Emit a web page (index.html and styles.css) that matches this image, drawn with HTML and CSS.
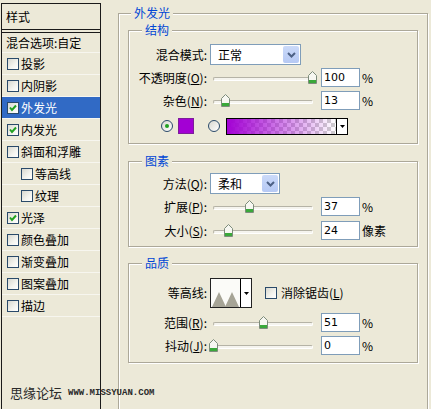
FILE: index.html
```html
<!DOCTYPE html>
<html lang="zh-CN">
<head>
<meta charset="utf-8">
<title>图层样式</title>
<link rel="stylesheet" href="styles.css">
</head>
<body>
<div class="dialog">
  <div class="sidebar">
    <div class="side-head">样式</div>
    <div class="side-blend">混合选项:自定</div>
    <ul class="side-list">
      <li class="item"><span class="cb"></span>投影</li>
      <li class="item"><span class="cb"></span>内阴影</li>
      <li class="item selected"><span class="cb"><svg viewBox="0 0 10 10" width="10" height="10"><polyline points="2,4.5 4,7 8,2.5" fill="none" stroke="#21a121" stroke-width="2"/></svg></span>外发光</li>
      <li class="item"><span class="cb"><svg viewBox="0 0 10 10" width="10" height="10"><polyline points="2,4.5 4,7 8,2.5" fill="none" stroke="#21a121" stroke-width="2"/></svg></span>内发光</li>
      <li class="item"><span class="cb"></span>斜面和浮雕</li>
      <li class="item sub"><span class="cb"></span>等高线</li>
      <li class="item sub"><span class="cb"></span>纹理</li>
      <li class="item"><span class="cb"><svg viewBox="0 0 10 10" width="10" height="10"><polyline points="2,4.5 4,7 8,2.5" fill="none" stroke="#21a121" stroke-width="2"/></svg></span>光泽</li>
      <li class="item"><span class="cb"></span>颜色叠加</li>
      <li class="item"><span class="cb"></span>渐变叠加</li>
      <li class="item"><span class="cb"></span>图案叠加</li>
      <li class="item"><span class="cb"></span>描边</li>
    </ul>
  </div>

  <div class="main">
    <div class="group outer">
      <span class="legend">外发光</span>

      <div class="group inner g-struct">
        <span class="legend">结构</span>
        <div class="row row-select">
          <span class="label">混合模式:</span>
          <div class="select w91">
            <span class="sel-val">正常</span>
            <span class="sel-btn"><svg viewBox="0 0 9 6" width="9" height="6"><polyline points="1,1 4.5,4.5 8,1" fill="none" stroke="#4d6185" stroke-width="2"/></svg></span>
          </div>
        </div>
        <div class="row row-slider mt3">
          <span class="label">不透明度(<u>O</u>):</span>
          <div class="slider"><span class="track"></span><svg class="thumb" style="left:98px" viewBox="0 0 9 13" width="9" height="13"><path d="M4.5 0.5 L8.5 4.5 V12.5 H0.5 V4.5 Z" fill="#f7f7f1" stroke="#7d8c7b"/><rect x="1" y="9" width="7" height="3" fill="#3aa83a"/></svg></div>
          <span class="num">100</span><span class="unit">%</span>
        </div>
        <div class="row row-slider mt4">
          <span class="label">杂色(<u>N</u>):</span>
          <div class="slider"><span class="track"></span><svg class="thumb" style="left:11px" viewBox="0 0 9 13" width="9" height="13"><path d="M4.5 0.5 L8.5 4.5 V12.5 H0.5 V4.5 Z" fill="#f7f7f1" stroke="#7d8c7b"/><rect x="1" y="9" width="7" height="3" fill="#3aa83a"/></svg></div>
          <span class="num">13</span><span class="unit">%</span>
        </div>
        <div class="row row-color">
          <span class="radio checked"><span class="dot"></span></span>
          <span class="swatch"></span>
          <span class="radio radio-gap"></span>
          <div class="gradient">
            <span class="ramp"></span>
            <span class="drop"><svg viewBox="0 0 5 3" width="5" height="3"><polygon points="0,0 5,0 2.5,3" fill="#000"/></svg></span>
          </div>
        </div>
      </div>

      <div class="group inner g-elem">
        <span class="legend">图素</span>
        <div class="row row-select">
          <span class="label">方法(<u>Q</u>):</span>
          <div class="select w70">
            <span class="sel-val">柔和</span>
            <span class="sel-btn"><svg viewBox="0 0 9 6" width="9" height="6"><polyline points="1,1 4.5,4.5 8,1" fill="none" stroke="#4d6185" stroke-width="2"/></svg></span>
          </div>
        </div>
        <div class="row row-slider mt3">
          <span class="label">扩展(<u>P</u>):</span>
          <div class="slider"><span class="track"></span><svg class="thumb" style="left:35px" viewBox="0 0 9 13" width="9" height="13"><path d="M4.5 0.5 L8.5 4.5 V12.5 H0.5 V4.5 Z" fill="#f7f7f1" stroke="#7d8c7b"/><rect x="1" y="9" width="7" height="3" fill="#3aa83a"/></svg></div>
          <span class="num">37</span><span class="unit">%</span>
        </div>
        <div class="row row-slider mt5">
          <span class="label">大小(<u>S</u>):</span>
          <div class="slider"><span class="track"></span><svg class="thumb" style="left:14px" viewBox="0 0 9 13" width="9" height="13"><path d="M4.5 0.5 L8.5 4.5 V12.5 H0.5 V4.5 Z" fill="#f7f7f1" stroke="#7d8c7b"/><rect x="1" y="9" width="7" height="3" fill="#3aa83a"/></svg></div>
          <span class="num">24</span><span class="unit">像素</span>
        </div>
      </div>

      <div class="group inner g-qual">
        <span class="legend">品质</span>
        <div class="row row-contour">
          <span class="label">等高线:</span>
          <div class="contour">
            <span class="preview"><svg viewBox="0 0 29 28" width="29" height="28"><polygon points="1,28 8,13 15,28" fill="#a6a496"/><polygon points="14,28 21,13 28,28" fill="#a6a496"/></svg></span>
            <span class="drop"><svg viewBox="0 0 5 3" width="5" height="3"><polygon points="0,0 5,0 2.5,3" fill="#000"/></svg></span>
          </div>
          <span class="cb cb-gap"></span><span class="cb-label">消除锯齿(<u>L</u>)</span>
        </div>
        <div class="row row-slider mt5">
          <span class="label">范围(<u>R</u>):</span>
          <div class="slider"><span class="track"></span><svg class="thumb" style="left:49px" viewBox="0 0 9 13" width="9" height="13"><path d="M4.5 0.5 L8.5 4.5 V12.5 H0.5 V4.5 Z" fill="#f7f7f1" stroke="#7d8c7b"/><rect x="1" y="9" width="7" height="3" fill="#3aa83a"/></svg></div>
          <span class="num">51</span><span class="unit">%</span>
        </div>
        <div class="row row-slider mt4">
          <span class="label">抖动(<u>J</u>):</span>
          <div class="slider"><span class="track"></span><svg class="thumb" style="left:-1px" viewBox="0 0 9 13" width="9" height="13"><path d="M4.5 0.5 L8.5 4.5 V12.5 H0.5 V4.5 Z" fill="#f7f7f1" stroke="#7d8c7b"/><rect x="1" y="9" width="7" height="3" fill="#3aa83a"/></svg></div>
          <span class="num">0</span><span class="unit">%</span>
        </div>
      </div>
    </div>
  </div>

  <div class="watermark"><span class="wm-cn">思缘论坛</span><span class="wm-url">www.missyuan.com</span></div>
</div>
</body>
</html>
```

FILE: styles.css
```css
html, body {
  margin: 0;
  padding: 0;
}
body {
  width: 431px;
  height: 409px;
  overflow: hidden;
  background: #ece9d8;
  color: #000;
  font-family: "Noto Sans CJK SC", "DejaVu Sans", sans-serif;
  font-size: 12px;
  line-height: 14px;
}
.dialog {
  position: relative;
  display: flex;
  height: 409px;
  overflow: hidden;
}

/* ---------- left style list ---------- */
.sidebar {
  flex: none;
  width: 100px;
  height: 430px;
  margin: 3px 0 0 1px;
  box-sizing: border-box;
  border: 1px solid #1a1a1a;
  border-bottom: none;
}
.side-head {
  height: 25px;
  line-height: 25px;
  padding-left: 4px;
  border-bottom: 1px solid #1a1a1a;
}
.side-blend {
  margin-top: 2px;
  border-top: 1px solid #1a1a1a;
  height: 19px;
  line-height: 19px;
  padding-left: 4px;
  border-bottom: 1px solid #f7f6ef;
}
.side-list {
  list-style: none;
  margin: 0;
  padding: 0;
}
.item {
  display: flex;
  align-items: center;
  height: 21px;
  padding-left: 5px;
  border-bottom: 1px solid #f7f6ef;
  white-space: nowrap;
}
.item.sub {
  padding-left: 19px;
}
.item.selected {
  background: #316ac5;
  color: #fff;
}
.cb {
  flex: none;
  display: flex;
  align-items: center;
  justify-content: center;
  width: 12px;
  height: 12px;
  box-sizing: border-box;
  border: 1px solid #2a4a6a;
  background: linear-gradient(135deg, #d8d8d0 0%, #f4f4ef 60%, #ffffff 100%);
  margin-right: 2px;
}
.cb svg {
  display: block;
}

/* ---------- right panel ---------- */
.main {
  flex: 1;
  min-width: 0;
  padding: 13px 3px 0 17px;
}
.group {
  position: relative;
  border: 1px solid #aca899;
  box-shadow: inset 1px 1px 0 #fff, 1px 1px 0 #fff;
}
.legend {
  position: absolute;
  top: -8px;
  left: 13px;
  padding: 0 3px;
  line-height: 14px;
  background: #ece9d8;
  color: #0046d5;
  white-space: nowrap;
}
.outer {
  padding: 16px 9px 80px 9px;
}
.outer > .legend {
  left: 12px;
}
.g-struct {
  padding: 13px 0 9px 0;
}
.g-elem {
  margin-top: 17px;
  padding: 11px 0 6px 0;
}
.g-qual {
  margin-top: 16px;
  padding: 14px 0 7px 0;
}

.row {
  display: flex;
  align-items: center;
  white-space: nowrap;
}
.row-select { height: 21px; }
.row-slider { height: 19px; }
.row-color { height: 16px; margin-top: 8px; padding-left: 32px; }
.row-contour { height: 30px; }
.mt3 { margin-top: 3px; }
.mt4 { margin-top: 4px; }
.mt5 { margin-top: 5px; }

.label {
  flex: none;
  width: 78px;
  margin-right: 3px;
  text-align: right;
}
u {
  text-decoration: underline;
  text-underline-offset: 1px;
}

/* select */
.select {
  display: flex;
  height: 21px;
  box-sizing: border-box;
  border: 1px solid #7f9db9;
  background: #fff;
}
.w91 { width: 91px; }
.w70 { width: 70px; }
.sel-val {
  flex: 1;
  padding-left: 7px;
  line-height: 19px;
}
.sel-btn {
  flex: none;
  width: 16px;
  margin: 1px;
  border-radius: 2px;
  background: linear-gradient(#cbdaf9, #b6c9f4);
  display: flex;
  align-items: center;
  justify-content: center;
}
.sel-btn svg { display: block; }

/* slider */
.slider {
  position: relative;
  flex: none;
  width: 105px;
  height: 19px;
  display: flex;
  align-items: center;
}
.track {
  flex: 1;
  height: 4px;
  margin: 2px 2px 0 3px;
  box-sizing: border-box;
  border: 1px solid #b5b3a6;
  border-right-color: #fff;
  border-bottom-color: #fff;
  border-radius: 2px;
  background: #f5f4ee;
}
.thumb {
  position: absolute;
  top: 3px;
  display: block;
}

.num {
  flex: none;
  width: 39px;
  height: 19px;
  margin-left: 6px;
  box-sizing: border-box;
  border: 1px solid #7f9db9;
  background: #fff;
  padding-left: 2px;
  line-height: 17px;
  font-family: "DejaVu Sans", sans-serif;
  font-size: 11px;
}
.unit {
  margin-left: 2px;
}

/* colour row */
.radio {
  flex: none;
  width: 12px;
  height: 12px;
  box-sizing: border-box;
  border: 1px solid #2a4a6a;
  border-radius: 50%;
  background: linear-gradient(135deg, #d8d8d0, #ffffff);
  display: flex;
  align-items: center;
  justify-content: center;
}
.radio .dot {
  width: 4px;
  height: 4px;
  border-radius: 50%;
  background: #21a121;
}
.radio-gap {
  margin-left: 14px;
}
.swatch {
  flex: none;
  width: 16px;
  height: 16px;
  margin-left: 5px;
  box-sizing: border-box;
  border: 1px solid #7d1d9a;
  background: #a300d4;
}
.gradient {
  flex: none;
  display: flex;
  width: 122px;
  height: 17px;
  margin-left: 6px;
  box-sizing: border-box;
  border: 1px solid #000;
}
.ramp {
  flex: 1;
  background:
    linear-gradient(to right, rgba(163, 0, 212, 1), rgba(163, 0, 212, 0)),
    conic-gradient(#cfcfcf 25%, #ffffff 0 50%, #cfcfcf 0 75%, #ffffff 0) 0 0 / 8px 8px;
}
.drop {
  flex: none;
  width: 10px;
  border-left: 1px solid #000;
  background: #fff;
  display: flex;
  align-items: center;
  justify-content: center;
}
.drop svg { display: block; }

/* contour */
.contour {
  flex: none;
  display: flex;
  width: 42px;
  height: 30px;
  box-sizing: border-box;
  border: 1px solid #222;
}
.preview {
  flex: 1;
  background: #fbfbf8;
  display: flex;
  align-items: flex-end;
}
.preview svg { display: block; }
.cb-gap {
  margin-left: 13px;
}
.cb-label {
  margin-left: 2px;
}

/* watermark */
.watermark {
  position: absolute;
  left: 10px;
  top: 386px;
  display: flex;
  align-items: center;
}
.wm-cn {
  font-size: 13px;
  color: #2a2a2a;
}
.wm-url {
  margin-left: 6px;
  font-family: "Liberation Mono", monospace;
  font-weight: bold;
  font-size: 9px;
  text-transform: uppercase;
  color: #2a2a2a;
}
```
